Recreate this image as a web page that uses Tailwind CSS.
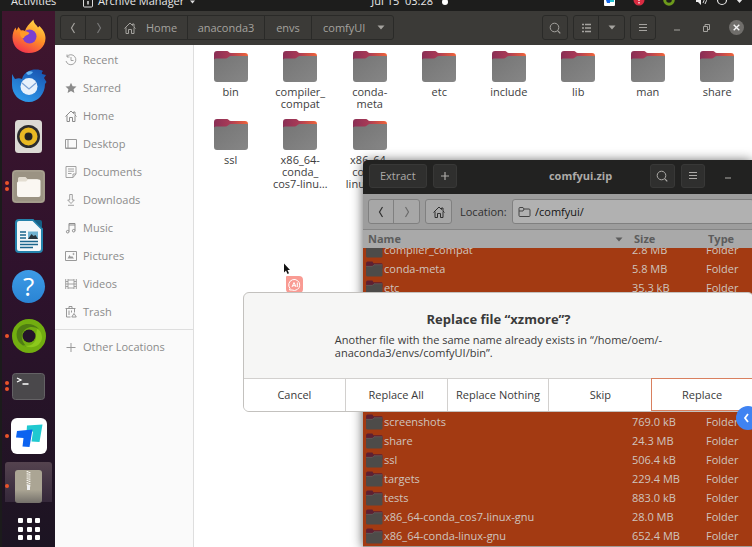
<!DOCTYPE html>
<html lang="en">
<head>
    <meta charset="UTF-8">
    <meta name="viewport" content="width=device-width, initial-scale=1.0">
    <title>comfyUI - Files</title>
    <script src="https://cdn.jsdelivr.net/npm/@tailwindcss/browser@4"></script>
</head>
<body class="h-screen overflow-hidden flex flex-col bg-[#1d1d1c] font-['Open_Sans','Noto_Sans',sans-serif] text-[11px] leading-[14px]">

    <!-- Shared icons -->
    <svg class="absolute w-0 h-0">
        <linearGradient id="tab" x1="0" x2="1"><stop offset="0" stop-color="#8a2f55"/><stop offset=".45" stop-color="#a83a56"/><stop offset="1" stop-color="#f0643a"/></linearGradient>
        <linearGradient id="face" x1="0" y1="0" x2="1" y2="1"><stop offset="0" stop-color="#757575"/><stop offset="1" stop-color="#868686"/></linearGradient>
        <symbol id="folder" viewBox="0 0 34 31">
            <path d="M0 3a3 3 0 0 1 3-3h10c1.500 0 2 2 4 2h14a3 3 0 0 1 3 3v9H0z" fill="url(#tab)"/>
            <path d="M0 9c0-1 1-1.500 2.500-1.500H12c2 0 2.500-2.500 4.500-2.500H34v23a3 3 0 0 1-3 3H3a3 3 0 0 1-3-3z" fill="url(#face)"/>
        </symbol>
        <symbol id="folder-small" viewBox="0 0 17 15">
            <path d="M1 2q0-1.500 1.500-1.500h4.500l1 1.500h7.500q1 0 1 1v4H1z" fill="#5e2032"/>
            <path d="M1 5h6l1.500-1.500H16.500v10q0 1-1 1h-13.500q-1 0-1-1z" fill="#4d4b49"/>
            <path d="M1 5h6l1.500-1.500H16.500" fill="none" stroke="#6b6462" stroke-width=".6"/>
        </symbol>
        <symbol id="home" viewBox="0 0 12 12"><path d="M.5 6.500 6 1l2.500 2.500V2h1.500v3l1.500 1.500M2 5.500v6h2.500v-4h3v4H10v-6" fill="none" stroke="currentColor"/></symbol>
        <symbol id="prev" viewBox="0 0 12 12"><path d="M7.500 1 4.500 6l3 5" fill="none" stroke="currentColor" stroke-width="1.200"/></symbol>
        <symbol id="next" viewBox="0 0 12 12"><path d="M4.500 1l3 5-3 5" fill="none" stroke="currentColor" stroke-width="1.200"/></symbol>
        <symbol id="search" viewBox="0 0 12 12"><circle cx="5.500" cy="5.500" r="4.300" fill="none" stroke="currentColor"/><path d="m8.600 8.600 2.700 2.700" stroke="currentColor" stroke-width="1.200"/></symbol>
        <symbol id="menu" viewBox="0 0 12 12"><path d="M2 2.500h8M2 5.500h8M2 8.500h8" stroke="currentColor" stroke-width="1"/></symbol>
        <symbol id="down" viewBox="0 0 8 5"><path d="M.5.5h7L4 4.500z" fill="currentColor"/></symbol>
    </svg>

    <!-- Top panel -->
    <header class="relative z-10 h-[11px] shrink-0 overflow-hidden flex items-end pb-[3px] pl-[11px] pr-2 text-[#e8e8e8]">
        <span class="w-[72px]">Activities</span>
        <svg class="w-[10px] h-[12px] mr-[5px]" viewBox="0 0 10 12"><rect x=".5" y=".5" width="9" height="10.500" rx="1" fill="none" stroke="#ddd"/><path d="M5 5v3.500" stroke="#ddd" stroke-width="1.500"/></svg>
        <span>Archive Manager</span>
        <svg class="w-[5px] h-[4px] ml-[6px] mb-[4px]" viewBox="0 0 8 5"><path d="M0 0h8L4 5z" fill="#ddd"/></svg>
        <span class="ml-auto mr-[9px]">Jul 15&nbsp; 03:28</span>
        <span class="w-[6px] h-[6px] mb-[3px] rounded-full bg-white"></span>
        <div class="w-[296px] shrink-0 flex items-end justify-end">
            <svg class="w-[148px] h-[14px]" viewBox="0 0 148 14">
                <rect x="8" y="0" width="11" height="12" rx="1" fill="#fff"/><path d="M9 3h5v6H11z" fill="#1668e8"/><path d="M14 3h4v5h-4z" fill="#23c4d2"/>
                <circle cx="43" cy="6" r="5.500" fill="#d92b41"/><path d="M43 3v4M43 8v1.500" stroke="#fff" stroke-width="1.200"/>
                <circle cx="73" cy="6" r="4.300" fill="none" stroke="#6d9a1b" stroke-width="3"/>
                <path d="M100 5h2l3-3v9l-3-3h-2z" fill="#eee"/><path d="M107 4q2 2.500 0 5M109 3q3 3.500 0 7" fill="none" stroke="#ddd"/>
                <circle cx="126" cy="6" r="4.500" fill="none" stroke="#e5e5e5" stroke-width="1.200"/>
                <path d="M140 5h7l-3.500 4z" fill="#e5e5e5"/>
            </svg>
        </div>
    </header>

    <div class="flex flex-1 min-h-0">
        <!-- Dock -->
        <nav class="w-[55px] shrink-0 border-l-2 border-[#1b1b1b] bg-linear-to-b from-[#40152e] via-[#2e122c] to-[#1c1422] flex flex-col items-center">
            <button class="relative w-full h-[50px] shrink-0 grid place-items-center" aria-label="Firefox">
                <svg class="w-[34px] h-[34px]" viewBox="0 0 34 34">
                    <linearGradient id="fx" x1=".8" y1="0" x2=".3" y2="1"><stop offset="0" stop-color="#ffe14a"/><stop offset=".5" stop-color="#ff9026"/><stop offset="1" stop-color="#f2324e"/></linearGradient>
                    <path d="M17 34C7 34 .5 27 .5 18.500c0-4 1-7 3-10l1 3 2-3.500 2.500 3.500c2-.5 3 0 4 .5 1-4 4-7 8.500-11.500 0 4 3 5 4.500 8l1.500-1.500c3 3 6 7 6 12C33.500 28 26 34 17 34z" fill="url(#fx)"/>
                    <circle cx="17.500" cy="17.500" r="7" fill="#7a3fd0"/>
                    <path d="M8 13c4-2 7-.5 9.500 1-2 3-5 2-5.500 5-3 1-4-3-4-6z" fill="#ff9a28"/>
                </svg>
            </button>
            <button class="relative w-full h-[50px] shrink-0 grid place-items-center" aria-label="Thunderbird">
                <svg class="w-[36px] h-[36px]" viewBox="0 0 36 36">
                    <linearGradient id="tb" x1=".7" y1="0" x2=".2" y2="1"><stop offset="0" stop-color="#1958b4"/><stop offset="1" stop-color="#2f9dee"/></linearGradient>
                    <path d="M1 6l3 5c3-1 5-1 7 0 2-7 8-9.500 14-9.500 3 0 5 .5 7 1.500-1 1-1.500 2-1 3l4 1-2 3 2.500 4-1.500 2c0 10-7 18-16 18C8 34 1 26 1 17z" fill="url(#tb)"/>
                    <circle cx="18" cy="18.500" r="8.500" fill="#e8f1fb"/>
                    <path d="m11 15 7 6 7-6" fill="none" stroke="#7fa4d6" stroke-width="1.300"/>
                    <path d="M15 5c2-2 5-2 7-1-1 2-3 3-5 3z" fill="#67b7f4"/>
                </svg>
            </button>
            <button class="relative w-full h-[50px] shrink-0 grid place-items-center" aria-label="Rhythmbox">
                <svg class="w-[27px] h-[33px]" viewBox="0 0 27 33"><rect width="27" height="33" rx="3.500" fill="#dcd9d4"/><circle cx="13.500" cy="16.500" r="11.500" fill="#2b2b2d"/><circle cx="13.500" cy="16.500" r="6.500" fill="none" stroke="#e9b923" stroke-width="5"/><circle cx="13.500" cy="16.500" r="3.200" fill="#222"/></svg>
            </button>
            <button class="relative w-full h-[50px] shrink-0 grid place-items-center" aria-label="Files">
                <span class="absolute left-[3px] top-[20px] w-[4px] h-[4px] rounded-full bg-[#e9542a] shadow-[0_6px_0_#e9542a]"></span>
                <svg class="w-[33px] h-[33px]" viewBox="0 0 33 33"><rect width="33" height="33" rx="4" fill="#9b9383"/><rect x="1" y="1" width="31" height="31" rx="3.500" fill="none" stroke="#aca494"/><path d="M6 8.500Q6 7 7.500 7h6l2 2H25q1.500 0 1.500 1.500V14H6z" fill="#e3ddd1"/><path d="M5 13q0-1.500 1.500-1.500h7.500l2-2H27q1.500 0 1.500 1.500v14q0 2-2 2H7q-2 0-2-2z" fill="#faf7f2"/></svg>
            </button>
            <button class="relative w-full h-[50px] shrink-0 grid place-items-center" aria-label="LibreOffice Writer">
                <svg class="w-[28px] h-[34px]" viewBox="0 0 28 34"><path d="M4 1h14l9 9v20q0 3-3 3H4q-3 0-3-3V4q0-3 3-3z" fill="#f4f8fa" stroke="#2482ab" stroke-width="2"/><path d="M19 1h6q2 0 2 2v6z" fill="#155e83"/><path d="M5 13h6M5 16h6M5 19h6M5 22.500h18M5 25.500h18M5 28.500h13" stroke="#1b668d" stroke-width="1.500"/><rect x="13" y="12.500" width="10" height="7.500" fill="#71b3d1"/><path d="m13 20 3.500-5 2 2 2-1 2.500 4z" fill="#28343b"/></svg>
            </button>
            <button class="relative w-full h-[50px] shrink-0 grid place-items-center" aria-label="Help">
                <span class="w-[33px] h-[33px] rounded-full bg-linear-to-b from-[#3d9be6] to-[#2a84d4] text-white text-[26px] leading-[32px]">?</span>
            </button>
            <button class="relative w-full h-[50px] shrink-0 grid place-items-center" aria-label="Green ring">
                <span class="absolute left-[3px] top-[23px] w-[4px] h-[4px] rounded-full bg-[#e9542a]"></span>
                <svg class="w-[34px] h-[34px]" viewBox="0 0 34 34"><circle cx="17" cy="17" r="11.500" fill="none" stroke="#72ae10" stroke-width="11"/><path d="M5 12C8 4 20 2 27 10c-7-4-14-2-17 5-1 6 2 11 6 13C8 27 3 20 5 12z" fill="#4f7d13"/><path d="M24 16c1 7-5 13-13 10 9 5 18 1 19-7 0-5-2-8-5-9z" fill="#8cc81c"/><circle cx="17" cy="17" r="6.500" fill="#24142a"/></svg>
            </button>
            <button class="relative w-full h-[50px] shrink-0 grid place-items-center" aria-label="Terminal">
                <span class="absolute left-[3px] top-[20px] w-[4px] h-[4px] rounded-full bg-[#e9542a] shadow-[0_6px_0_#e9542a]"></span>
                <svg class="w-[33px] h-[27px]" viewBox="0 0 33 27"><rect x=".5" y=".5" width="32" height="26" rx="3" fill="#4a484b" stroke="#646265"/><path d="m5 5 4 2-4 2M10.500 11h6" fill="none" stroke="#fff" stroke-width="1.300"/></svg>
            </button>
            <button class="relative w-full h-[50px] shrink-0 grid place-items-center" aria-label="ToDesk">
                <span class="absolute left-[3px] top-[23px] w-[4px] h-[4px] rounded-full bg-[#e9542a]"></span>
                <svg class="w-[36px] h-[36px]" viewBox="0 0 36 36"><rect width="36" height="36" rx="6" fill="#fff"/><path d="M16 7.500 31.500 6.500 28.500 24l-8-.5 1.500-10-6.500 1z" fill="#20c9d0"/><path d="M6 13l15.500-1.500L18.500 29l-7-.5 1-8.500-7.500-.5z" fill="#0c63f0"/></svg>
            </button>
            <button class="relative w-full h-[50px] shrink-0 grid place-items-center" aria-label="Archive Manager">
                <span class="absolute left-[3px] top-[1px] w-[47px] h-[40px] rounded-t-[3px] bg-linear-to-b from-[#54434f] to-[#35283a]"></span>
                <span class="absolute left-[3px] top-[23px] w-[4px] h-[4px] rounded-full bg-[#e9542a]"></span>
                <svg class="relative w-[27px] h-[33px]" viewBox="0 0 27 33"><linearGradient id="zip" x1="0" y1="0" x2="0" y2="1"><stop offset=".6" stop-color="#aba594"/><stop offset="1" stop-color="#74706a"/></linearGradient><rect width="27" height="33" rx="3" fill="url(#zip)"/><path d="M12.500 1v15M14.500 2v15" stroke="#f4f1ea" stroke-width="1.800" stroke-dasharray="1.200 1"/><path d="M12 15h3v5h-3z" fill="#eee"/></svg>
            </button>
            <button class="w-full flex-1 grid place-items-center" aria-label="Show Applications">
                <svg class="w-[24px] h-[24px]" viewBox="0 0 24 24" fill="#fff"><rect x="1" y="1" width="5" height="5" rx="1"/><rect x="10" y="1" width="5" height="5" rx="1"/><rect x="18" y="1" width="5" height="5" rx="1"/><rect x="1" y="10" width="5" height="5" rx="1"/><rect x="10" y="10" width="5" height="5" rx="1"/><rect x="18" y="10" width="5" height="5" rx="1"/><rect x="1" y="18" width="5" height="5" rx="1"/><rect x="10" y="18" width="5" height="5" rx="1"/><rect x="18" y="18" width="5" height="5" rx="1"/></svg>
            </button>
        </nav>

        <!-- Files window -->
        <section class="flex-1 min-w-0 flex flex-col bg-white">
            <div class="h-[34px] shrink-0 flex items-center gap-[5px] px-[5px] pb-px bg-[#3b3a37] text-[#a5a39f]">
                <div class="flex h-[25px] border border-[#2a2a28] rounded-[3px] divide-x divide-[#2a2a28]">
                    <button class="w-[25px] grid place-items-center" aria-label="Back"><svg class="w-3 h-3"><use href="#prev"/></svg></button>
                    <button class="w-[25px] grid place-items-center text-[#777]" aria-label="Forward"><svg class="w-3 h-3"><use href="#next"/></svg></button>
                </div>
                <div class="flex h-[25px] border border-[#2a2a28] rounded-[3px] divide-x divide-[#2a2a28]">
                    <button class="w-[70px] flex items-center pl-[6px] gap-[10px]"><svg class="w-3 h-3"><use href="#home"/></svg>Home</button>
                    <button class="w-[77px]">anaconda3</button>
                    <button class="w-[47px]">envs</button>
                    <button class="w-[81px] flex items-center justify-between pl-[11px] pr-[8px]">comfyUI<svg class="w-2 h-[5px]"><use href="#down"/></svg></button>
                </div>
                <button class="ml-auto w-[26px] h-[25px] border border-[#2a2a28] rounded-[3px] grid place-items-center" aria-label="Search"><svg class="w-3 h-3"><use href="#search"/></svg></button>
                <div class="flex h-[25px] border border-[#2a2a28] rounded-[3px] divide-x divide-[#2a2a28]">
                    <button class="w-[25px] grid place-items-center" aria-label="List view"><svg class="w-3 h-3" viewBox="0 0 12 12"><path d="M2 2.500h2M2 6h2M2 9.500h2M5 2.500h6M5 6h6M5 9.500h6" stroke="currentColor" stroke-width="1.700"/></svg></button>
                    <button class="w-[25px] grid place-items-center" aria-label="View options"><svg class="w-2 h-[5px]"><use href="#down"/></svg></button>
                </div>
                <button class="w-[26px] h-[25px] border border-[#2a2a28] rounded-[3px] grid place-items-center" aria-label="Menu"><svg class="w-3 h-3"><use href="#menu"/></svg></button>
                <div class="flex items-center gap-[15px] pl-[10px] pr-[3px]">
                    <button aria-label="Minimise"><svg class="w-3 h-3" viewBox="0 0 12 12"><path d="M3 8h6" stroke="currentColor"/></svg></button>
                    <button aria-label="Restore"><svg class="w-4 h-3" viewBox="0 0 16 12"><path d="M5.500 4.500h4v5h-4zM7 4.500v-2h4.500v5h-2" fill="none" stroke="currentColor"/></svg></button>
                    <button class="w-[15px] h-[15px] rounded-full bg-[#706e6b] grid place-items-center" aria-label="Close"><svg class="w-[7px] h-[7px]" viewBox="0 0 7 7"><path d="m.7.7 5.600 5.600M6.300.7.7 6.300" stroke="#f3f3f3" stroke-width="1.400"/></svg></button>
                </div>
            </div>

            <div class="flex flex-1 min-h-0">
                <aside class="w-[139px] shrink-0 pt-[1px] bg-[#fafafa] border-r border-[#dedede] text-[#8b8b8b]">
                    <a href="#" class="h-7 flex items-center gap-[6px] pl-[10px]"><svg class="w-3 h-3" viewBox="0 0 12 12" fill="none" stroke="#999" stroke-width=".9"><path d="M2 2.500A5 5 0 1 1 1 7M2 .5v2.500h2.500M6 3v3.500h2.500"/></svg>Recent</a>
                    <a href="#" class="h-7 flex items-center gap-[6px] pl-[10px]"><svg class="w-3 h-3" viewBox="0 0 12 12" fill="#8b8b8b"><path d="m6 .7 1.600 3.500 3.900.4-2.900 2.600.8 3.900L6 9.100 2.600 11.100l.8-3.900L.5 4.600l3.900-.4z"/></svg>Starred</a>
                    <a href="#" class="h-7 flex items-center gap-[6px] pl-[10px]"><svg class="w-3 h-3"><use href="#home"/></svg>Home</a>
                    <a href="#" class="h-7 flex items-center gap-[6px] pl-[10px]"><svg class="w-3 h-3" viewBox="0 0 12 12" fill="none" stroke="#999"><path d="M.5 1.500h11v9H.5zM3 1.500v9M1 10h10.500"/></svg>Desktop</a>
                    <a href="#" class="h-7 flex items-center gap-[6px] pl-[10px]"><svg class="w-3 h-3" viewBox="0 0 12 12" fill="none" stroke="#999" stroke-width=".9"><path d="M1 .5h10v7.500l-3 3.500H1zM11 8H8v3.500M3 3h6M3 5.200h6M3 7.500h3.500"/></svg>Documents</a>
                    <a href="#" class="h-7 flex items-center gap-[6px] pl-[10px]"><svg class="w-3 h-3" viewBox="0 0 12 12" fill="none" stroke="#999" stroke-width=".9"><path d="M4.700.5h2.600V6h2L6 9.500 2.700 6h2zM3 11.300h6"/></svg>Downloads</a>
                    <a href="#" class="h-7 flex items-center gap-[6px] pl-[10px]"><svg class="w-3 h-3" viewBox="0 0 12 12" fill="none" stroke="#8d8d8d"><path d="M4 9.500V1.500h6v7M4 3h6"/><circle cx="2.700" cy="9.700" r="1.300"/><circle cx="8.700" cy="8.700" r="1.300"/></svg>Music</a>
                    <a href="#" class="h-7 flex items-center gap-[6px] pl-[10px]"><svg class="w-3 h-3" viewBox="0 0 12 12" fill="none" stroke="#999"><path d="M.5 1.500h11v9H.5z"/><path d="m2.500 8.500 2-3.500 1.500 2 1-1 2 2.500z" fill="#999" stroke="none"/><circle cx="8.500" cy="4" r=".6"/></svg>Pictures</a>
                    <a href="#" class="h-7 flex items-center gap-[6px] pl-[10px]"><svg class="w-3 h-3" viewBox="0 0 12 12" fill="none" stroke="#999" stroke-width=".9"><path d="M.7 1v10M11.300 1v10M3 1v10M9 1v10M3 2h6M3 6h6M3 10h6M.7 3.500H3M.7 6H3M.7 8.500H3M9 3.500h2.300M9 6h2.300M9 8.500h2.300"/></svg>Videos</a>
                    <a href="#" class="h-7 flex items-center gap-[6px] pl-[10px]"><svg class="w-3 h-3" viewBox="0 0 12 12" fill="none" stroke="#8d8d8d" stroke-width=".9"><path d="M.5 2.500h10M4 2.500v-2h3v2M1.500 2.500v8.500h4M9.500 2.500v4M4 4.500v4.500M6.500 4.500v2"/><path d="m9 7.500 2.300 3.500H6.800z"/></svg>Trash</a>
                    <hr class="my-[3px] border-[#dedede]">
                    <a href="#" class="h-7 flex items-center gap-[6px] pl-[10px]"><svg class="w-3 h-3" viewBox="0 0 12 12"><path d="M6 2v9M1.500 6.500h9" stroke="#999"/></svg>Other Locations</a>
                </aside>

                <ul class="flex-1 min-w-0 grid grid-cols-8 content-start gap-y-[8px] pt-[6px] pl-[2px] text-center leading-[12px] text-[#3d3d3d]">
                    <li class="h-[60px]"><svg class="w-[34px] h-[31px] mx-auto mb-[4px]"><use href="#folder"/></svg>bin</li>
                    <li class="h-[60px]"><svg class="w-[34px] h-[31px] mx-auto mb-[4px]"><use href="#folder"/></svg>compiler_<br>compat</li>
                    <li class="h-[60px]"><svg class="w-[34px] h-[31px] mx-auto mb-[4px]"><use href="#folder"/></svg>conda-<br>meta</li>
                    <li class="h-[60px]"><svg class="w-[34px] h-[31px] mx-auto mb-[4px]"><use href="#folder"/></svg>etc</li>
                    <li class="h-[60px]"><svg class="w-[34px] h-[31px] mx-auto mb-[4px]"><use href="#folder"/></svg>include</li>
                    <li class="h-[60px]"><svg class="w-[34px] h-[31px] mx-auto mb-[4px]"><use href="#folder"/></svg>lib</li>
                    <li class="h-[60px]"><svg class="w-[34px] h-[31px] mx-auto mb-[4px]"><use href="#folder"/></svg>man</li>
                    <li class="h-[60px]"><svg class="w-[34px] h-[31px] mx-auto mb-[4px]"><use href="#folder"/></svg>share</li>
                    <li class="h-[60px]"><svg class="w-[34px] h-[31px] mx-auto mb-[4px]"><use href="#folder"/></svg>ssl</li>
                    <li class="h-[60px]"><svg class="w-[34px] h-[31px] mx-auto mb-[4px]"><use href="#folder"/></svg>x86_64-<br>conda_<br>cos7-linu…</li>
                    <li class="h-[60px]"><svg class="w-[34px] h-[31px] mx-auto mb-[4px]"><use href="#folder"/></svg>x86_64-<br>conda-<br>linux-gnu</li>
                </ul>
            </div>
        </section>
    </div>

    <!-- Archive Manager window -->
    <section class="absolute left-[363px] right-0 top-[160px] bottom-0 flex flex-col overflow-hidden rounded-tl-[5px] border-b border-[#a09a96] bg-[#a33a12] shadow-[0_1px_12px_rgba(0,0,0,0.65)]">
        <div class="relative h-[34px] shrink-0 flex items-center gap-[6px] pl-[6px] pb-[2px] bg-[#222221] text-[#adaba8]">
            <button class="w-[59px] h-[24px] rounded-[3px] bg-[#2f2f2e] border border-[#383837]">Extract</button>
            <button class="w-[25px] h-[24px] rounded-[3px] bg-[#2f2f2e] border border-[#383837] grid place-items-center" aria-label="Add files"><svg class="w-3 h-3" viewBox="0 0 12 12"><path d="M6 2v8M2 6h8" stroke="currentColor" stroke-width="1.200"/></svg></button>
            <h1 class="flex-1 text-center font-bold pl-[86px]">comfyui.zip</h1>
            <button class="ml-[32px] w-[25px] h-[24px] rounded-[3px] bg-[#2f2f2e] border border-[#383837] grid place-items-center" aria-label="Search"><svg class="w-3 h-3"><use href="#search"/></svg></button>
            <button class="w-[25px] h-[24px] rounded-[3px] bg-[#2f2f2e] border border-[#383837] grid place-items-center" aria-label="Menu"><svg class="w-3 h-3"><use href="#menu"/></svg></button>
            <button class="ml-[11px] mr-[18px]" aria-label="Minimise"><svg class="w-3 h-3" viewBox="0 0 12 12"><path d="M3 8h6" stroke="currentColor"/></svg></button>
        </div>
        <div class="h-[36px] shrink-0 flex items-center gap-[5px] pl-[5px] bg-[#9d9d9d] border-b border-[#858585] text-[#2f2f2f]">
            <div class="flex h-[25px] border border-[#808080] rounded-[3px] divide-x divide-[#808080] bg-[#a7a7a7]">
                <button class="w-[25px] grid place-items-center" aria-label="Back"><svg class="w-3 h-3"><use href="#prev"/></svg></button>
                <button class="w-[25px] grid place-items-center text-[#6b6b6b]" aria-label="Forward"><svg class="w-3 h-3"><use href="#next"/></svg></button>
            </div>
            <button class="w-[27px] h-[25px] border border-[#808080] rounded-[3px] bg-[#a7a7a7] grid place-items-center" aria-label="Home"><svg class="w-3 h-3"><use href="#home"/></svg></button>
            <label for="location" class="pl-[3px] w-[50px]">Location:</label>
            <div class="flex-1 -mr-[2px] h-[25px] flex items-center gap-[4px] pl-[5px] border border-[#808080] rounded-[3px] bg-[#b1b1b1]">
                <svg class="w-[13px] h-[12px] shrink-0" viewBox="0 0 13 12"><path d="M1 2.500q0-1 1-1h3l1 1.500h5q1 0 1 1v5.500q0 1-1 1H2q-1 0-1-1zM1 5h4l1-2" fill="none" stroke="#444"/></svg>
                <input id="location" type="text" value="/comfyui/" class="flex-1 min-w-0 bg-transparent outline-none text-[#141414]">
            </div>
        </div>
        <div class="h-[18px] shrink-0 flex items-center pl-[5px] bg-[#a9a9a9] text-[#5c5c5c] font-bold">
            <span class="flex-1">Name</span>
            <svg class="w-2 h-[5px] mr-[11px]"><use href="#down"/></svg>
            <span class="w-[74px]">Size</span>
            <span class="w-[44px]">Type</span>
        </div>
        <div class="flex-1 min-h-0 overflow-hidden">
            <table class="w-full -mt-[8px] text-[#cfc4be] whitespace-nowrap">
                <tbody>
                    <tr class="h-[19px]"><td class="p-0"><div class="flex items-center gap-[1px] pl-[2px]"><svg class="w-[18px] h-[16px]"><use href="#folder-small"/></svg>compiler_compat</div></td><td class="p-0 w-[74px]">2.8 MB</td><td class="p-0 w-[46px]">Folder</td></tr>
                    <tr class="h-[19px]"><td class="p-0"><div class="flex items-center gap-[1px] pl-[2px]"><svg class="w-[18px] h-[16px]"><use href="#folder-small"/></svg>conda-meta</div></td><td class="p-0">5.8 MB</td><td class="p-0">Folder</td></tr>
                    <tr class="h-[19px]"><td class="p-0"><div class="flex items-center gap-[1px] pl-[2px]"><svg class="w-[18px] h-[16px]"><use href="#folder-small"/></svg>etc</div></td><td class="p-0">35.3 kB</td><td class="p-0">Folder</td></tr>
                    <tr class="h-[115px]"><td colspan="3"></td></tr>
                    <tr class="h-[19px]"><td class="p-0"><div class="flex items-center gap-[1px] pl-[2px]"><svg class="w-[18px] h-[16px]"><use href="#folder-small"/></svg>screenshots</div></td><td class="p-0">769.0 kB</td><td class="p-0">Folder</td></tr>
                    <tr class="h-[19px]"><td class="p-0"><div class="flex items-center gap-[1px] pl-[2px]"><svg class="w-[18px] h-[16px]"><use href="#folder-small"/></svg>share</div></td><td class="p-0">24.3 MB</td><td class="p-0">Folder</td></tr>
                    <tr class="h-[19px]"><td class="p-0"><div class="flex items-center gap-[1px] pl-[2px]"><svg class="w-[18px] h-[16px]"><use href="#folder-small"/></svg>ssl</div></td><td class="p-0">506.4 kB</td><td class="p-0">Folder</td></tr>
                    <tr class="h-[19px]"><td class="p-0"><div class="flex items-center gap-[1px] pl-[2px]"><svg class="w-[18px] h-[16px]"><use href="#folder-small"/></svg>targets</div></td><td class="p-0">229.4 MB</td><td class="p-0">Folder</td></tr>
                    <tr class="h-[19px]"><td class="p-0"><div class="flex items-center gap-[1px] pl-[2px]"><svg class="w-[18px] h-[16px]"><use href="#folder-small"/></svg>tests</div></td><td class="p-0">883.0 kB</td><td class="p-0">Folder</td></tr>
                    <tr class="h-[19px]"><td class="p-0"><div class="flex items-center gap-[1px] pl-[2px]"><svg class="w-[18px] h-[16px]"><use href="#folder-small"/></svg>x86_64-conda_cos7-linux-gnu</div></td><td class="p-0">28.0 MB</td><td class="p-0">Folder</td></tr>
                    <tr class="h-[19px]"><td class="p-0"><div class="flex items-center gap-[1px] pl-[2px]"><svg class="w-[18px] h-[16px]"><use href="#folder-small"/></svg>x86_64-conda-linux-gnu</div></td><td class="p-0">652.4 MB</td><td class="p-0">Folder</td></tr>
                </tbody>
            </table>
        </div>
    </section>

    <!-- Pointer and assistant badge -->
    <svg class="absolute left-[283px] top-[263px] w-[8px] h-[12px]" viewBox="0 0 8 12"><path d="M1 .5v9l2-2 1.500 3.500 1.500-.7L4.500 7H7z" fill="#111"/></svg>
    <button class="absolute left-[286px] top-[276px]" aria-label="AI assistant">
        <svg class="w-[17px] h-[17px]" viewBox="0 0 17 17"><path d="M0 1q0-1 1-1h12q4 0 4 4v9q0 4-4 4H4q-4 0-4-4z" fill="#f99b93"/><path d="M4 12.500A5.500 5.500 0 1 1 6 14H3.500z" fill="none" stroke="#fff"/><path d="m6 11 2-4.500L10 11M6.700 9.700h2.500M11.300 6.500V11" fill="none" stroke="#fff"/></svg>
    </button>

    <!-- Conflict dialog -->
    <div role="dialog" aria-labelledby="dialogTitle" class="absolute left-[243px] -right-[2px] top-[292px] h-[120px] flex flex-col overflow-hidden rounded-[6px] border border-[#c3c1be] bg-[#f6f6f5] text-[#3a3a3a]">
        <div class="flex-1 flex flex-col items-center pt-[17px]">
            <h2 id="dialogTitle" class="text-[13px] leading-[18px] font-bold">Replace file “xzmore”?</h2>
            <p class="mt-[5px] leading-[13px]">Another file with the same name already exists in “/home/oem/-<br>anaconda3/envs/comfyUI/bin”.</p>
        </div>
        <div class="h-[33px] grid grid-cols-5 bg-white whitespace-nowrap">
            <button class="border-t border-r border-[#d2d0ce]">Cancel</button>
            <button class="border-t border-r border-[#d2d0ce]">Replace All</button>
            <button class="border-t border-r border-[#d2d0ce]">Replace Nothing</button>
            <button class="border-t border-[#d2d0ce]">Skip</button>
            <button class="border border-[#d9805f]">Replace</button>
        </div>
    </div>

    <button class="absolute -right-[8px] top-[406px] w-[24px] h-[24px] rounded-full bg-[#3f83f2] pl-[7px]" aria-label="Open side panel">
        <svg class="w-[8px] h-[10px]" viewBox="0 0 8 10"><path d="M5 1 2 5l3 4" fill="none" stroke="#fff" stroke-width="1.800"/></svg>
    </button>
</body>
</html>
